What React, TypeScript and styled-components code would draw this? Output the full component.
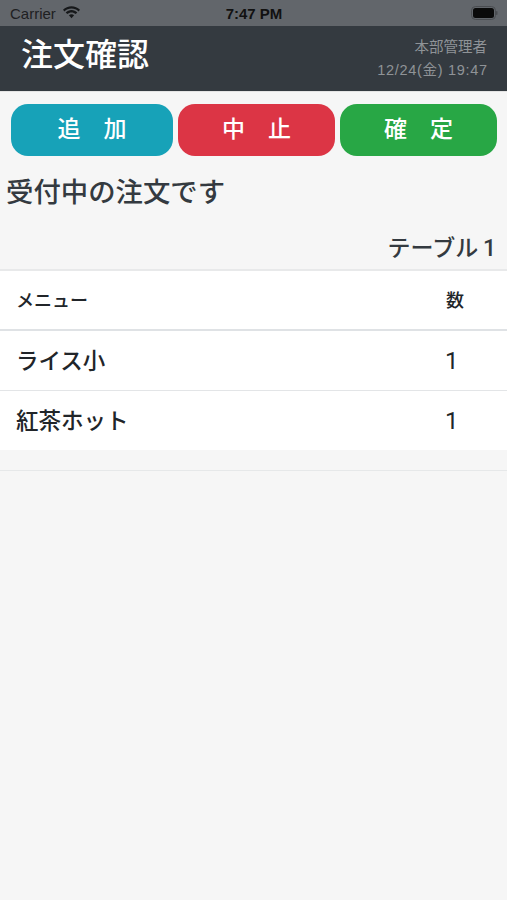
import React, { ReactElement } from 'react'
import styled, { createGlobalStyle } from 'styled-components'

const fontStack = `"Liberation Sans", "Noto Sans CJK JP", sans-serif`
const robotoStack = `Roboto, "Noto Sans CJK JP", sans-serif`

const GlobalStyle = createGlobalStyle`
  html, body {
    margin: 0;
    padding: 0;
    background: #f6f6f6;
    font-family: ${fontStack};
  }
`

const Page = styled.div`
  width: 507px;
  height: 900px;
  overflow: hidden;
  background: #f6f6f6;
  color: #343a40;
`

const StatusBar = styled.div`
  height: 26px;
  background: #62666b;
  display: grid;
  grid-template-columns: 1fr auto 1fr;
  align-items: center;
  padding: 0 9px 0 10px;
  color: #111;
  font-size: 15px;
`

const Carrier = styled.div`
  display: flex;
  align-items: center;
  gap: 6px;
  color: #1e2022;
`

const Clock = styled.div`
  font-weight: 700;
  font-size: 15px;
`

const BatteryWrap = styled.div`
  justify-self: end;
  display: flex;
`

const Header = styled.div`
  height: 65px;
  background: #343a40;
  display: flex;
  justify-content: space-between;
  align-items: center;
  padding: 0 20px 0 21px;
  border-bottom: 1px solid #e4e4e4;
`

const Title = styled.h1`
  margin: 0 0 8px;
  font-size: 32px;
  font-weight: 500;
  line-height: 1;
  color: #fff;
`

const HeaderInfo = styled.div`
  text-align: right;
  color: #8f9397;
  font-size: 14.5px;
  line-height: 23px;
  padding-top: 1px;
`

const DateLine = styled.div`
  letter-spacing: 0.7px;
  margin-right: -0.7px;
`

const ButtonRow = styled.div`
  display: flex;
  gap: 5px;
  padding: 12px 10px 0 11px;
`

const Action = styled.button<{ $bg: string; $width: number }>`
  width: ${(p) => p.$width}px;
  height: 52px;
  border: 0;
  border-radius: 17px;
  background: ${(p) => p.$bg};
  color: #fff;
  font-family: ${fontStack};
  font-size: 23px;
  font-weight: 500;
  line-height: 1;
  white-space: pre;
  padding: 0 0 2px;
`

const Heading = styled.h2`
  margin: 20px 0 0 6px;
  font-size: 27.4px;
  line-height: 33px;
  font-weight: 500;
  color: #343a40;
`

const TableLabel = styled.div`
  margin-top: 24px;
  padding-right: 11px;
  text-align: right;
  font-family: ${robotoStack};
  font-size: 23px;
  line-height: 32px;
  font-weight: 500;
  word-spacing: -1px;
  color: #343a40;
`

const Table = styled.div`
  margin-top: 4px;
  background: #fff;
  border-top: 2px solid #e8e9ea;
`

const Row = styled.div<{ $head?: boolean }>`
  display: grid;
  grid-template-columns: 1fr 105px;
  align-items: center;
  height: ${(p) => (p.$head ? 57 : 59)}px;
  padding: ${(p) => (p.$head ? '1px 0 0 16px' : '0 0 0 16px')};
  font-size: ${(p) => (p.$head ? 18 : 22.5)}px;
  line-height: 1;
  font-weight: 500;
  color: #212529;
  border-bottom: ${(p) => (p.$head ? '2px solid #dfe2e5' : '1px solid #e3e5e7')};

  &:last-child {
    border-bottom: 0;
  }
`

const Name = styled.div`
  padding-top: 3px;
`

const Count = styled.div<{ $head?: boolean }>`
  padding-left: ${(p) => (p.$head ? 44 : 43)}px;
  font-family: ${robotoStack};
  font-size: ${(p) => (p.$head ? 18 : 24)}px;
  font-weight: ${(p) => (p.$head ? 500 : 400)};
`

const Rule = styled.div`
  margin-top: 20px;
  height: 1px;
  background: #e6e8e9;
`

function WifiIcon(): ReactElement {
  return (
    <svg width="19" height="14" viewBox="0 0 19 14" fill="#16181a">
      <path d="M9.5 2.6c2.7 0 5.1 1 7 2.8L18 3.8C15.7 1.6 12.7.3 9.5.3S3.3 1.6 1 3.8l1.5 1.6c1.9-1.8 4.3-2.8 7-2.8z" />
      <path d="M9.5 6.4c1.6 0 3.1.6 4.2 1.7l1.6-1.6c-1.5-1.5-3.6-2.4-5.8-2.4s-4.3.9-5.8 2.4l1.6 1.6c1.1-1.1 2.6-1.7 4.2-1.7z" />
      <path d="M9.5 8.3c-1 0-1.9.4-2.6 1l2.6 3 2.6-3c-.7-.6-1.6-1-2.6-1z" />
    </svg>
  )
}

function BatteryIcon(): ReactElement {
  return (
    <svg width="27" height="14" viewBox="0 0 27 14">
      <rect x="0.5" y="0.5" width="24" height="13" rx="4" fill="none" stroke="#4a4d51" />
      <rect x="2" y="2" width="21" height="10" rx="2.5" fill="#0a0a0a" />
      <rect x="25" y="5" width="1.5" height="4" rx="0.7" fill="#4a4d51" />
    </svg>
  )
}

const orders = [
  { name: 'ライス小', count: 1 },
  { name: '紅茶ホット', count: 1 },
]

export default function App(): ReactElement {
  return (
    <Page>
      <GlobalStyle />
      <StatusBar>
        <Carrier>
          Carrier
          <WifiIcon />
        </Carrier>
        <Clock>7:47 PM</Clock>
        <BatteryWrap>
          <BatteryIcon />
        </BatteryWrap>
      </StatusBar>
      <Header>
        <Title>注文確認</Title>
        <HeaderInfo>
          <div>本部管理者</div>
          <DateLine>12/24(金) 19:47</DateLine>
        </HeaderInfo>
      </Header>
      <ButtonRow>
        <Action $bg="#17a2b8" $width={162}>追　加</Action>
        <Action $bg="#dc3545" $width={157}>中　止</Action>
        <Action $bg="#28a745" $width={157}>確　定</Action>
      </ButtonRow>
      <Heading>受付中の注文です</Heading>
      <TableLabel>テーブル 1</TableLabel>
      <Table>
        <Row $head>
          <div>メニュー</div>
          <Count $head>数</Count>
        </Row>
        {orders.map((o) => (
          <Row key={o.name}>
            <Name>{o.name}</Name>
            <Count>{o.count}</Count>
          </Row>
        ))}
      </Table>
      <Rule />
    </Page>
  )
}
